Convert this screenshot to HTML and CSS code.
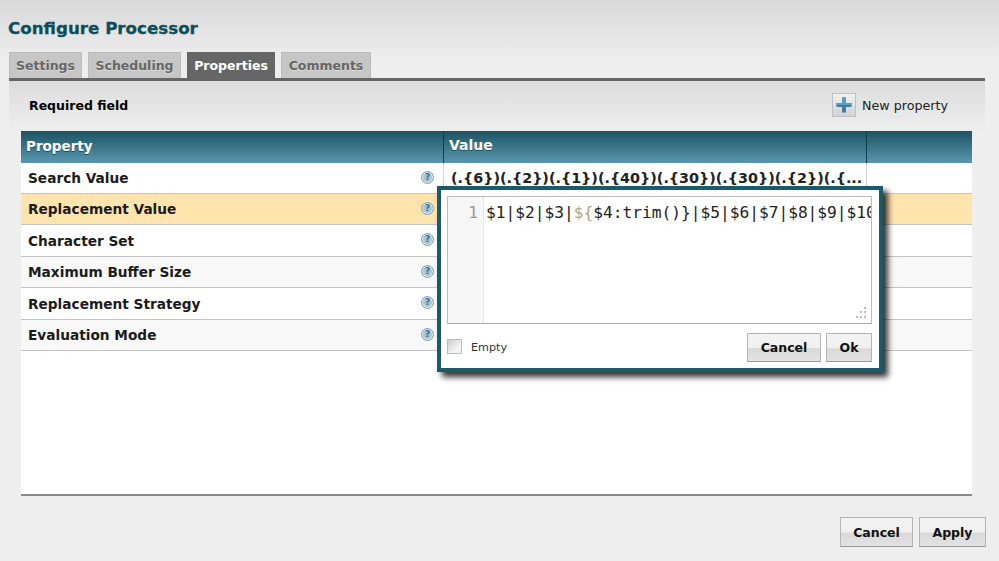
FILE: index.html
```html
<!DOCTYPE html>
<html lang="en">
<head>
<meta charset="utf-8">
<title>Configure Processor</title>
<link rel="stylesheet" href="styles.css">
</head>
<body>
<div class="page">
  <h1 class="title">Configure Processor</h1>
  <nav class="tabs">
    <span class="tab t1">Settings</span>
    <span class="tab t2">Scheduling</span>
    <span class="tab t3 active">Properties</span>
    <span class="tab t4">Comments</span>
  </nav>
  <section class="panel">
    <div class="toolbar">
      <span class="required">Required field</span>
      <span class="new">
        <span class="plus"><svg width="18" height="18" viewBox="0 0 18 18"><path d="M7 1.5h4V7h5.500v4H11v5.500H7V11H1.500V7H7z" fill="#3f7f9e"/><path d="M7 1.500h4V7h5.500v2H1.500V7H7z" fill="#5c9dbb"/></svg></span>
        New property
      </span>
    </div>
    <div class="grid">
      <div class="row head">
        <div class="c1">Property</div><div class="c2">Value</div><div class="c3"></div>
      </div>
      <div class="row h31"><div class="c1"><span>Search Value</span><i class="help">?</i></div><div class="c2 val">(.{6})(.{2})(.{1})(.{40})(.{30})(.{30})(.{2})(.{...</div><div class="c3"></div></div>
      <div class="row h31 sel"><div class="c1"><span>Replacement Value</span><i class="help">?</i></div><div class="c2"></div><div class="c3"></div></div>
      <div class="row h32"><div class="c1"><span>Character Set</span><i class="help">?</i></div><div class="c2"></div><div class="c3"></div></div>
      <div class="row h31 alt"><div class="c1"><span>Maximum Buffer Size</span><i class="help">?</i></div><div class="c2"></div><div class="c3"></div></div>
      <div class="row h32"><div class="c1"><span>Replacement Strategy</span><i class="help">?</i></div><div class="c2"></div><div class="c3"></div></div>
      <div class="row h31 alt"><div class="c1"><span>Evaluation Mode</span><i class="help">?</i></div><div class="c2"></div><div class="c3"></div></div>
    </div>
  </section>
  <footer class="actions">
    <button class="btn b-cancel">Cancel</button>
    <button class="btn b-apply">Apply</button>
  </footer>
</div>
<div class="dialog">
  <div class="editor">
    <div class="gutter">1</div>
    <div class="code">$1|$2|$3|<span class="el">${</span>$4:trim()}|$5|$6|$7|$8|$9|$10</div>
    <svg class="grip" width="14" height="14" viewBox="0 0 14 14"><g fill="#bbb"><rect x="10" y="1" width="2" height="2"/><rect x="6" y="5" width="2" height="2"/><rect x="10" y="5" width="2" height="2"/><rect x="2" y="10" width="2" height="2"/><rect x="6" y="10" width="2" height="2"/><rect x="10" y="10" width="2" height="2"/></g></svg>
  </div>
  <div class="dlg-foot">
    <span class="check"></span>
    <span class="empty">Empty</span>
    <button class="btn d-cancel">Cancel</button>
    <button class="btn d-ok">Ok</button>
  </div>
</div>
</body>
</html>
```
FILE: styles.css
```css
* { box-sizing: border-box; }
html, body { margin: 0; height: 100%; }
body {
  width: 999px; height: 561px; overflow: hidden; position: relative;
  background: #eeeeee;
  font-family: "DejaVu Sans", Verdana, sans-serif;
  color: #111;
}
.page {
  height: 561px; display: flex; flex-direction: column;
  padding: 0 14px 0 9px;
  background: linear-gradient(#d9d9d9 0, #eeeeee 62px);
}
.title {
  margin: 0 0 0 -1px; padding-top: 18px; height: 52px;
  font-size: 16.700px; line-height: 21px; font-weight: bold; color: #0f4d5a;
  -webkit-text-stroke: 0.3px #0f4d5a;
}
.tabs { display: flex; gap: 6px; height: 26px; }
.tab {
  display: block; height: 26px; background: #c6c6c6; border: 1px solid #bcbcbc; border-bottom: 0;
  font-size: 12.500px; font-weight: bold; line-height: 26px; color: #666; text-align: center;
  text-shadow: 0 1px 0 #ddd;
}
.t1 { width: 73px; }
.t2 { width: 93px; }
.t3 { width: 88px; }
.t4 { width: 90px; }
.tab.active { background: #666; border-color: #666; color: #fff; text-shadow: none; }
.panel {
  flex: none; height: 418px; border-top: 3px solid #666;
  background: linear-gradient(#dcdcdc 0, #eeeeee 50px);
  padding: 0 13px 0 12px;
  display: flex; flex-direction: column;
}
.toolbar {
  height: 50px; display: flex; justify-content: space-between; align-items: center;
  padding: 0 24px 2px 8px;
  font-size: 12.700px;
}
.required { font-weight: bold; font-size: 12.500px; color: #000; }
.new { display: flex; align-items: center; gap: 6px; color: #222; }
.plus {
  width: 24px; height: 24px; display: flex; align-items: center; justify-content: center;
  background: linear-gradient(#f2f2f2, #d2d2d2); border: 1px solid #c0c0c0;
}
.grid { flex: 1; background: #fff; border-bottom: 2px solid #8a8a8a; }
.row { display: flex; border-bottom: 1px solid #c4c4c4; }
.h31 { height: 31px; }
.h32 { height: 32px; }
.alt { background: #f8f8f8; }
.sel { background: #ffe4ae; }
.c1 {
  width: 423px; display: flex; justify-content: space-between; align-items: center;
  padding: 0 9px 0 7px; font-size: 13.700px; font-weight: bold; color: #1b1b1b; border-right: 1px solid #d2d2d2;
}
.c2 { width: 423px; font-size: 14.350px; font-weight: bold; padding: 0 7px; line-height: 31px; white-space: nowrap; overflow: hidden; border-right: 1px solid #d2d2d2; color: #222; }
.c3 { width: 105px; }
.row.head {
  height: 32px; border-bottom: 0;
  background: linear-gradient(#1c5362, #5a97ae);
  color: #fff; font-weight: bold;
}
.head .c1 { padding: 0 5px 3px; font-size: 13.500px; color: #fff; border-right: 1px solid #0f3e4b; text-shadow: 0 1px 0 #1d5060; }
.head .c2 { color: #fff; font-size: 14px; padding: 0 5px; line-height: 29px; border-right: 1px solid #0f3e4b; text-shadow: 0 1px 0 #1d5060; }
.help {
  width: 13px; height: 13px; border-radius: 50%; flex: none; margin-top: -2px;
  background: #a9c4d3; border: 1px solid #7fa2b6;
  font: bold 9px/11px "DejaVu Sans", sans-serif; text-align: center; box-shadow: inset 0 0 0 1px #dfeaf0;
  color: #3b6f8c;
}
.actions {
  flex: 1; display: flex; justify-content: flex-end; gap: 6px; padding: 21px 0 0 0; margin-right: -1px;
  align-items: flex-start;
}
.btn {
  font-family: "DejaVu Sans", Verdana, sans-serif; font-size: 12.500px; font-weight: bold; color: #111;
  background: linear-gradient(#f3f3f3 0, #f0f0f0 50%, #d9d9d9 55%, #e2e2e2 100%);
  border: 1px solid #b4b4b4; border-bottom-color: #999; padding: 0;
}
.b-cancel { width: 73px; height: 30px; }
.b-apply { width: 67px; height: 30px; }
.dialog {
  position: absolute; left: 437px; top: 186px; width: 446px; height: 186px;
  background: #fff; border: 4px solid #1b5a69; box-shadow: 5px 5px 6px rgba(0,0,0,.8);
  padding: 6px 7px 6px 6px; display: flex; flex-direction: column;
}
.editor {
  position: relative; height: 128px; border: 1px solid #bbb; border-bottom-color: #aaa; display: flex;
  font-family: "DejaVu Sans Mono", monospace; font-size: 16.200px; line-height: 19px; overflow: hidden;
}
.gutter { flex: none; width: 36px; background: #f6f6f6; border-right: 1px solid #e6e6e6; color: #999; text-align: right; padding: 6px 5px 0 0; }
.code { padding: 6px 0 0 2px; white-space: nowrap; color: #222; }
.el { color: #a8a888; }
.grip { position: absolute; right: 3px; bottom: 3px; }
.dlg-foot { position: relative; flex: 1; display: flex; align-items: center; padding-top: 8px; }
.check { width: 15px; height: 15px; margin-top: -2px; border: 1px solid #bbb; background: linear-gradient(135deg, #ccc, #f4f4f4 70%); }
.empty { font-size: 11.200px; margin-left: 9px; color: #333; }
.d-cancel { width: 74px; height: 29px; margin-left: auto; }
.d-ok { width: 46px; height: 29px; margin-left: 5px; }
```
